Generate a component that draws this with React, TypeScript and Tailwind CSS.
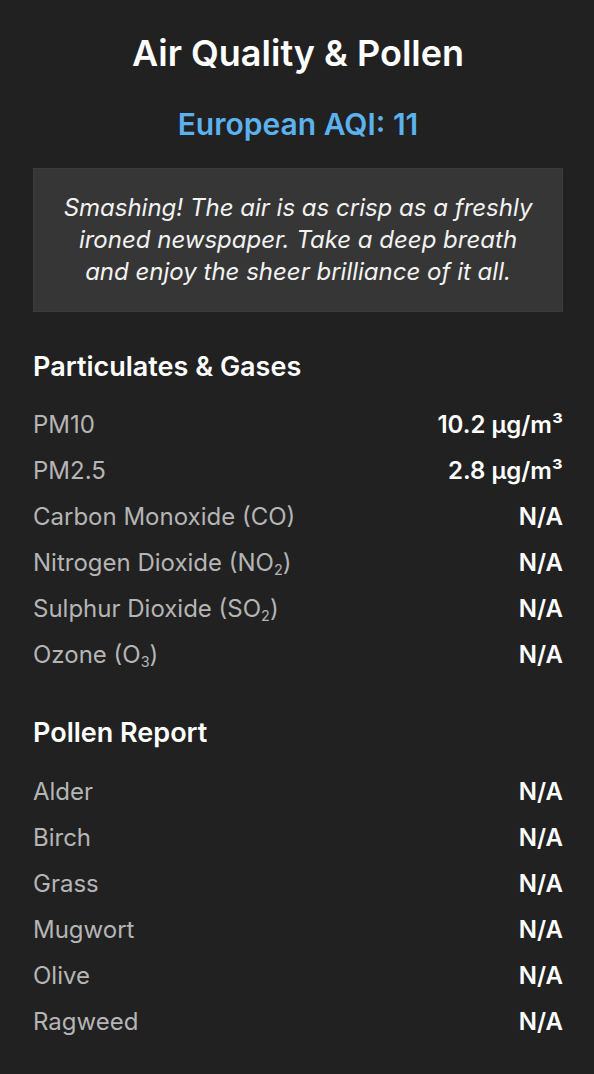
const gases = [
  { label: <>PM10</>, value: "10.2 µg/m³" },
  { label: <>PM2.5</>, value: "2.8 µg/m³" },
  { label: <>Carbon Monoxide (CO)</>, value: "N/A" },
  { label: <>Nitrogen Dioxide (NO<sub className="text-[0.6em]">2</sub>)</>, value: "N/A" },
  { label: <>Sulphur Dioxide (SO<sub className="text-[0.6em]">2</sub>)</>, value: "N/A" },
  { label: <>Ozone (O<sub className="text-[0.6em]">3</sub>)</>, value: "N/A" },
];

const pollen = ["Alder", "Birch", "Grass", "Mugwort", "Olive", "Ragweed"];

function Row({ label, value }: { label: React.ReactNode; value: string }) {
  return (
    <div className="flex h-[46px] items-center justify-between text-[24px] leading-[32px]">
      <span className="text-[#b5b5b5]">{label}</span>
      <span className="font-semibold text-white">{value}</span>
    </div>
  );
}

export default function App() {
  return (
    <div className="min-h-[1074px] bg-[#212121] pl-[33px] pr-[31px] pt-[28px] pb-8 font-['Inter',sans-serif] text-white">
      <h1 className="text-center text-[36px] leading-[50px] font-semibold">Air Quality &amp; Pollen</h1>
      <div className="mt-[26px] text-center text-[30px] leading-[40px] font-semibold text-[#5cb2ee]">
        European AQI: 11
      </div>
      <div className="mt-[24px] border border-[#3c3c3c] bg-[#363636] px-6 py-[23px] text-center text-[24px] leading-[32px] italic text-[#f2f2f2]">
        Smashing! The air is as crisp as a freshly ironed newspaper. Take a deep breath and enjoy the sheer
        brilliance of it all.
      </div>

      <h2 className="mt-[37px] text-[27px] leading-[36px] font-semibold">Particulates &amp; Gases</h2>
      <div className="mt-[17px]">
        {gases.map((g, i) => (
          <Row key={i} label={g.label} value={g.value} />
        ))}
      </div>

      <h2 className="mt-[37px] text-[27px] leading-[36px] font-semibold">Pollen Report</h2>
      <div className="mt-[18px]">
        {pollen.map((p) => (
          <Row key={p} label={p} value="N/A" />
        ))}
      </div>
    </div>
  );
}
